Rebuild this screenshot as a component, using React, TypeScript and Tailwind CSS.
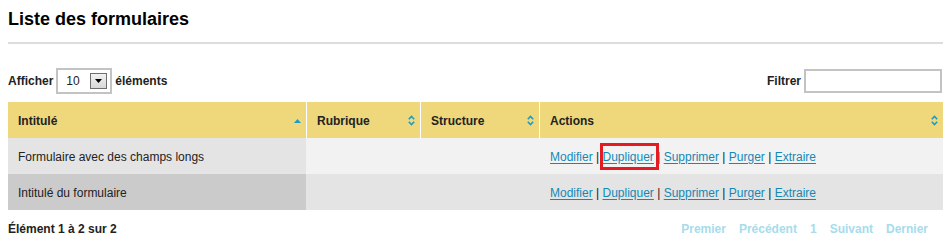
import React from 'react';

const SortBoth: React.FC = () => (
  <svg width="7" height="11" viewBox="0 0 7 11" className="shrink-0">
    <polyline points="0.8,4.2 3.5,1.4 6.2,4.2" fill="none" stroke="#1a9cc9" strokeWidth="1.6" />
    <polyline points="0.8,6.8 3.5,9.6 6.2,6.8" fill="none" stroke="#1a9cc9" strokeWidth="1.6" />
  </svg>
);

const SortAsc: React.FC = () => (
  <svg width="7" height="4" viewBox="0 0 7 4" className="shrink-0">
    <polygon points="0,4 3.5,0 7,4" fill="#1a9cc9" />
  </svg>
);

const columns = [
  { label: 'Intitulé', width: 'w-[298px]', icon: <SortAsc /> },
  { label: 'Rubrique', width: 'w-[114px] border-l border-white', icon: <SortBoth /> },
  { label: 'Structure', width: 'w-[119px] border-l border-white', icon: <SortBoth /> },
  { label: 'Actions', width: 'flex-1 border-l border-white', icon: <SortBoth /> },
];

const rows = [
  { title: 'Formulaire avec des champs longs', first: 'bg-[#e4e4e4]', rest: 'bg-[#f2f2f2]', highlight: true },
  { title: 'Intitulé du formulaire', first: 'bg-[#cbcbcb]', rest: 'bg-[#e4e4e4]', highlight: false },
];

const Actions: React.FC<{ highlight: boolean }> = ({ highlight }) => {
  const link = 'text-[#1589b5] underline underline-offset-[2px]';
  return (
    <span className="text-[#222]">
      <a className={link}>Modifier</a> |{' '}
      <span className="relative">
        <a className={link}>Dupliquer</a>
        {highlight && (
          <span className="pointer-events-none absolute top-[-7px] bottom-[-6px] left-[-2px] right-[-5px] border-[3px] border-[#e31b23]" />
        )}
      </span>{' '}
      | <a className={link}>Supprimer</a> | <a className={link}>Purger</a> |{' '}
      <a className={link}>Extraire</a>
    </span>
  );
};

const App: React.FC = () => {
  return (
    <div className="w-[952px] h-[242px] bg-white px-2 text-[12px] text-[#222]" style={{ fontFamily: '"Liberation Sans", Arial, sans-serif' }}>
      <h1 className="pt-[8px] text-[18px] leading-[22px] font-bold text-black">Liste des formulaires</h1>
      <div className="mt-[12px] h-[2px] w-[935px] bg-[#dddddd]" />

      <div className="mt-[24px] flex h-[26px] w-[935px] items-center justify-between pr-[1px]">
        <div className="flex items-center">
          <span className="font-bold">Afficher</span>
          <div className="ml-[3px] flex h-[26px] w-[56px] items-center justify-between border-2 border-[#c3c3c3] pl-[8px] pr-[3px]">
            <span>10</span>
            <span className="flex h-[16px] w-[17px] items-center justify-center border border-[#6e6e6e] bg-gradient-to-b from-[#f2f2f2] to-[#d8d8d8]">
              <svg width="7" height="4" viewBox="0 0 7 4">
                <polygon points="0,0 7,0 3.5,4" fill="#000" />
              </svg>
            </span>
          </div>
          <span className="ml-[3px] font-bold">éléments</span>
        </div>
        <div className="flex items-center">
          <span className="font-bold">Filtrer</span>
          <input className="ml-[3px] h-[24px] w-[138px] border-2 border-[#c3c3c3] outline-none" />
        </div>
      </div>

      <div className="mt-[8px] w-[935px]">
        <div className="flex h-[36px] bg-[#efd87b] font-bold">
          {columns.map((c) => (
            <div key={c.label} className={`${c.width} flex items-center justify-between pl-[10px] pr-[5px] pt-[1px]`}>
              <span>{c.label}</span>
              {c.icon}
            </div>
          ))}
        </div>
        {rows.map((r) => (
          <div key={r.title} className={`flex h-[36px] ${r.rest}`}>
            <div className={`w-[298px] flex items-center pl-[10px] pt-[1px] ${r.first}`}>{r.title}</div>
            <div className="w-[114px]" />
            <div className="w-[119px]" />
            <div className="flex-1 flex items-center pl-[11px] pt-[1px] leading-[16px]">
              <Actions highlight={r.highlight} />
            </div>
          </div>
        ))}
      </div>

      <div className="mt-[11px] flex w-[935px] items-center justify-between leading-[16px] font-bold">
        <span>Élément 1 à 2 sur 2</span>
        <div className="flex gap-[13px] pr-[15px] text-[#a6dcec]">
          <span>Premier</span>
          <span>Précédent</span>
          <span>1</span>
          <span>Suivant</span>
          <span>Dernier</span>
        </div>
      </div>
    </div>
  );
};

export default App;
